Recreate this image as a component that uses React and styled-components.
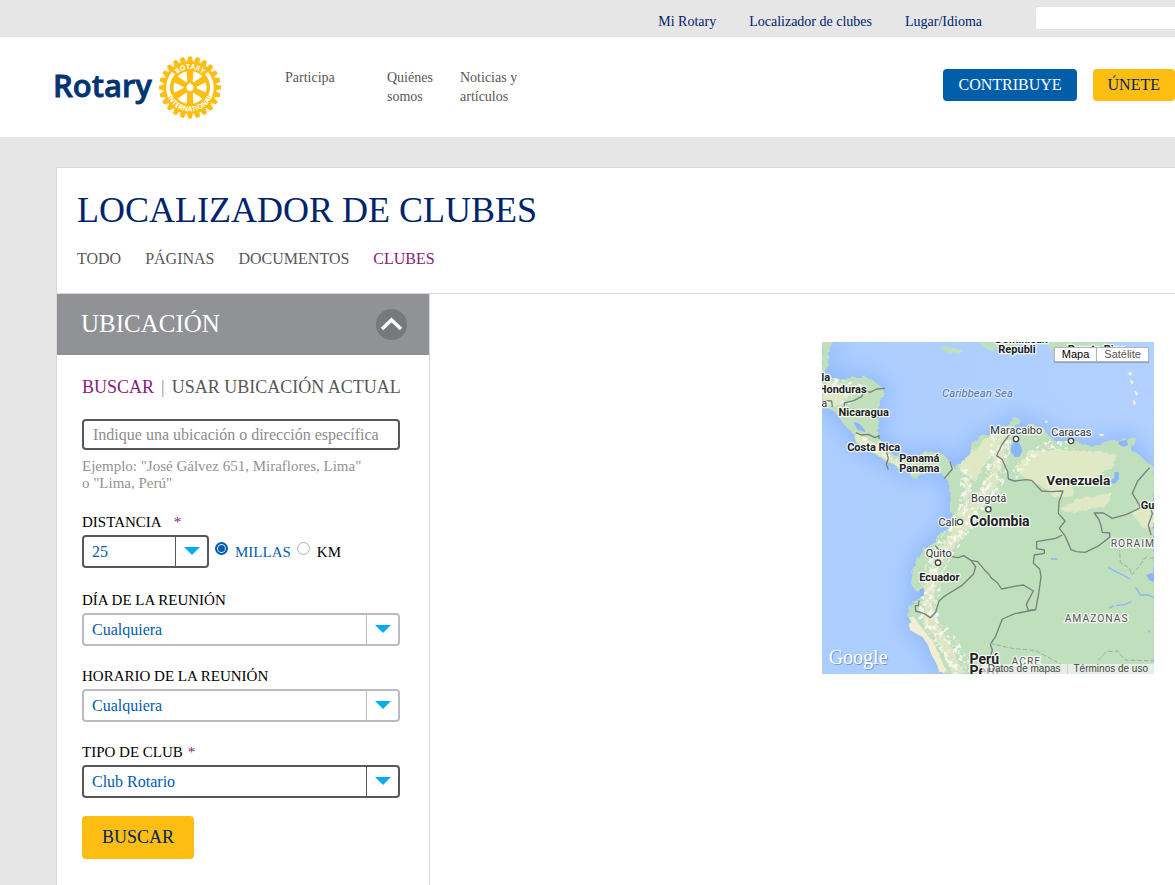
import { useState } from "react";
import styled, { createGlobalStyle } from "styled-components";

const serif = '"Liberation Serif", "Times New Roman", serif';

const GlobalStyle = createGlobalStyle`
  * {
    box-sizing: border-box;
  }

  body {
    margin: 0;
    background: #e6e6e6;
    font-family: ${serif};
    font-size: 15px;
    color: #58585a;
  }

  button, input, select {
    font-family: inherit;
  }
`;

const Page = styled.div`
  display: flex;
  flex-direction: column;
  min-height: 100vh;
`;

const TopBar = styled.div`
  display: flex;
  justify-content: flex-end;
  align-items: flex-start;
  height: 37px;
  padding: 7px 0 0 56px;
`;

const TopLinks = styled.nav`
  display: flex;
  gap: 33px;
  padding-top: 5px;

  a {
    color: #00246c;
    font-size: 14px;
    line-height: 19px;
    text-decoration: none;
  }
`;

const TopSearch = styled.input`
  width: 139px;
  height: 22px;
  margin-left: 54px;
  padding: 0 8px;
  border: none;
  border-radius: 2px 0 0 2px;
  background: #fff;
`;

const Header = styled.header`
  display: flex;
  align-items: flex-start;
  height: 100px;
  padding: 18px 0 0 54px;
  background: #fff;
`;

const LogoLink = styled.a`
  display: block;
  width: 170px;
  height: 64px;
  flex: none;

  svg {
    display: block;
  }
`;

const MainNav = styled.nav`
  display: flex;
  flex: 1;
  padding: 13px 0 0 61px;
`;

const NavItem = styled.a`
  width: ${(props) => (props.$wide ? "102px" : "73px")};
  color: #58585a;
  font-size: 14px;
  line-height: 19px;
  text-decoration: none;
`;

const Actions = styled.div`
  display: flex;
  gap: 16px;
  padding-top: 14px;
`;

const ActionButton = styled.button`
  height: 32px;
  padding: 0 15px;
  border: none;
  border-radius: 4px;
  background: ${(props) => (props.$gold ? "#febd11" : "#005daa")};
  color: ${(props) => (props.$gold ? "#00246c" : "#fff")};
  font-size: 16px;
  line-height: 32px;
  cursor: pointer;
`;

const Main = styled.main`
  display: flex;
  flex-direction: column;
  flex: 1;
  margin: 30px 0 0 56px;
  border: 1px solid #d9d9d9;
  border-width: 1px 0 0 1px;
  background: #fff;
`;

const TitleBlock = styled.div`
  padding: 21px 20px 24px;
  border-bottom: 1px solid #d9d9d9;

  h1 {
    margin: 0 0 18px;
    color: #00246c;
    font-size: 36px;
    font-weight: normal;
    line-height: 42px;
  }
`;

const Tabs = styled.nav`
  display: flex;
  gap: 24px;
`;

const Tab = styled.a`
  color: ${(props) => (props.$active ? "#872175" : "#58585a")};
  font-size: 16px;
  line-height: 20px;
  text-decoration: none;
`;

const Columns = styled.div`
  display: flex;
  flex: 1;
`;

const Sidebar = styled.aside`
  width: 373px;
  flex: none;
  border-right: 1px solid #d9d9d9;
`;

const PanelHeader = styled.div`
  display: flex;
  align-items: center;
  justify-content: space-between;
  height: 61px;
  padding: 0 22px 0 24px;
  background: #919295;

  h2 {
    margin: 0;
    padding-bottom: 2px;
    color: #fff;
    font-size: 25px;
    font-weight: normal;
    line-height: 30px;
  }
`;

const CollapseButton = styled.button`
  width: 31px;
  height: 31px;
  padding: 0;
  border: none;
  border-radius: 50%;
  background: #77787b;
  cursor: pointer;

  svg {
    display: block;
  }
`;

const Form = styled.form`
  padding: 22px 29px 24px 25px;
`;

const ModeRow = styled.div`
  display: flex;
  gap: 7px;
  margin-bottom: 22px;
  color: #919295;
  font-size: 18px;
  line-height: 20px;
  white-space: nowrap;
`;

const ModeButton = styled.button`
  padding: 0;
  border: none;
  background: none;
  color: ${(props) => (props.$active ? "#872175" : "#58585a")};
  font-size: 18px;
  line-height: 20px;
  cursor: pointer;
`;

const TextInput = styled.input`
  display: block;
  width: 100%;
  height: 31px;
  padding: 0 9px;
  border: 2px solid #58585a;
  border-radius: 4px;
  color: #005daa;
  font-size: 16px;

  &::placeholder {
    color: #8c8c8e;
    opacity: 1;
  }
`;

const Hint = styled.p`
  margin: 8px 0 20px;
  color: #919295;
  font-size: 15px;
  line-height: 17px;
`;

const Field = styled.div`
  margin-bottom: 20px;

  &:last-of-type {
    margin-bottom: 18px;
  }
`;

const Label = styled.label`
  display: flex;
  gap: ${(props) => (props.$spaced ? "12px" : "5px")};
  margin-bottom: 3px;
  color: #000;
  font-size: 15px;
  line-height: 20px;

  span {
    color: #872175;
  }
`;

const SelectBox = styled.div`
  display: grid;
  grid-template-columns: 1fr 32px;
  width: ${(props) => (props.$short ? "127px" : "100%")};
  height: 33px;
  border: 2px solid;
  border-color: ${(props) => (props.$required ? "#58585a" : "#bbbbc0")};
  border-radius: 4px;

  select {
    grid-area: 1 / 1 / 2 / 3;
    padding: 0 40px 0 8px;
    border: none;
    background: none;
    color: #005daa;
    font-size: 16px;
    appearance: none;
    cursor: pointer;
  }

  svg {
    grid-area: 1 / 2 / 2 / 3;
    width: 32px;
    height: 29px;
    border-left: 1px solid;
    border-color: inherit;
    pointer-events: none;
  }
`;

const DistanceRow = styled.div`
  display: flex;
  align-items: flex-start;
  margin-bottom: 22px;
`;

const RadioLabel = styled.label`
  display: flex;
  gap: 7px;
  margin: 7px 0 0 6px;
  color: ${(props) => (props.$checked ? "#005daa" : "#000")};
  font-size: 15px;
  line-height: 20px;
  cursor: pointer;

  input {
    width: 13px;
    height: 13px;
    margin: 0;
    border: 1px solid #b5b5b8;
    border-radius: 50%;
    background: #fff;
    appearance: none;
  }

  input:checked {
    border: 2px solid #005daa;
    background: #005daa;
    box-shadow: inset 0 0 0 1px #fff;
  }
`;

const SubmitButton = styled.button`
  height: 43px;
  padding: 0 20px;
  border: none;
  border-radius: 4px;
  background: #febd11;
  color: #00246c;
  font-size: 18px;
  cursor: pointer;
`;

const Results = styled.section`
  display: flex;
  flex: 1;
  justify-content: flex-end;
  align-items: flex-start;
  padding: 48px 21px 24px;
`;

const MapFrame = styled.div`
  position: relative;
  width: 332px;
  height: 332px;
  overflow: hidden;

  > svg {
    display: block;
    width: 100%;
    height: 100%;
  }
`;

const MapTypes = styled.div`
  position: absolute;
  top: 5px;
  right: 5px;
  display: flex;
  border: 1px solid #b0b5bd;
  background: #fff;
  box-shadow: 0 1px 1px rgba(0, 0, 0, 0.2);
`;

const MapType = styled.button`
  height: 13px;
  padding: 0 7px;
  border: none;
  background: none;
  color: ${(props) => (props.$active ? "#000" : "#565656")};
  font-family: "Liberation Sans", Arial, sans-serif;
  font-size: 11px;
  line-height: 13px;
  cursor: pointer;

  & + & {
    border-left: 1px solid #b0b5bd;
  }
`;

const MapTerms = styled.div`
  position: absolute;
  right: 0;
  bottom: 0;
  display: flex;
  background: rgba(245, 245, 245, 0.7);

  a {
    padding: 0 6px;
    color: #444;
    font-family: "Liberation Sans", Arial, sans-serif;
    font-size: 10px;
    line-height: 10px;
    text-decoration: none;
  }

  a + a {
    border-left: 1px solid #ccd5cc;
  }
`;

const teeth = Array.from({ length: 24 }, (_, i) => i * 15);
const spokes = [0, 60, 120, 180, 240, 300];

function RotaryLogo() {
  return (
    <svg width="170" height="64" viewBox="0 0 170 64" role="img" aria-label="Rotary">
      <text
        x="-1"
        y="42"
        fill="#003470"
        stroke="#003470"
        strokeWidth="0.8"
        fontFamily="Open Sans"
        fontWeight="600"
        fontSize="31"
      >
        Rotary
      </text>
      <g transform="translate(136 32.5)">
        <g fill="#febd11">
          {teeth.map((angle) => (
            <path key={angle} d="M-3 -26 L-1.800 -31 L1.800 -31 L3 -26Z" transform={`rotate(${angle})`} />
          ))}
          <circle r="26.500" />
        </g>
        <g fill="none" stroke="#fff" strokeWidth="3.600">
          <path d="M-16.500 -14.500 A22 22 0 0 0 -20 9" />
          <path d="M16.500 -14.500 A22 22 0 0 1 20 9" />
        </g>
        <circle r="16.500" fill="#fff" />
        <g fill="#febd11">
          {spokes.map((angle) => (
            <path key={angle} d="M-2.600 -4 L-3.400 -17 L3.400 -17 L2.600 -4Z" transform={`rotate(${angle})`} />
          ))}
          <circle r="6.500" />
        </g>
        <circle r="3.500" fill="#fff" />
        <path d="M-1 -4.500 h2 v2 h-2z" fill="#fff" />
        <path id="wheel-top" d="M-18.500 0 A18.500 18.500 0 0 1 18.500 0" fill="none" />
        <path id="wheel-bottom" d="M-24 0 A24 24 0 0 0 24 0" fill="none" />
        <g fill="#fff" fontFamily="Open Sans" fontWeight="700" fontSize="7" textAnchor="middle">
          <text>
            <textPath href="#wheel-top" startOffset="50%">ROTARY</textPath>
          </text>
          <text>
            <textPath href="#wheel-bottom" startOffset="50%">INTERNATIONAL</textPath>
          </text>
        </g>
      </g>
    </svg>
  );
}

const land =
  "M21 21 L55 21 L48 42 L40 60 L38 95 L32 118 L45 128 L90 132 L120 126 L150 126 L168 131 L185 145 L205 162 L208 180 L195 198 L193 225 L188 240 L192 262 L186 285 L192 310 L212 335 L235 360 L258 368 L290 372 L310 365 L325 352 L350 350 L385 358 L398 372 L412 388 L423 404 L427 388 L445 375 L465 360 L470 335 L480 315 L503 298 L520 302 L540 292 L560 275 L584 272 L585 256 L602 250 L618 256 L612 268 L598 276 L585 298 L604 300 L635 286 L642 272 L652 262 L664 274 L690 281 L696 296 L720 318 L760 318 L785 315 L800 328 L835 333 L860 325 L892 314 L915 315 L942 310 L965 308 L958 328 L945 342 L962 352 L980 366 L1000 386 L1017 396 L1017 1017 L375 1017 L367 990 L350 960 L338 928 L322 905 L285 885 L282 870 L290 862 L276 838 L278 822 L290 808 L305 795 L325 782 L326 764 L316 760 L312 770 L303 768 L292 752 L290 720 L298 690 L318 658 L322 642 L340 634 L362 622 L366 598 L382 590 L403 580 L410 540 L404 515 L410 498 L405 465 L400 440 L388 425 L370 405 L345 398 L325 410 L308 428 L290 427 L284 410 L250 402 L235 387 L215 382 L195 365 L160 347 L125 326 L118 300 L90 272 L70 245 L55 225 L21 218Z";

const borders = [
  "M148 165 L165 172 L185 162 L210 160 M148 165 L140 185 L118 196 L88 204 L88 214",
  "M21 196 L50 198 L52 216",
  "M122 293 L140 300 L160 298 L180 308 L192 302 L192 312",
  "M214 348 L220 370 L214 388 L220 404",
  "M405 380 L412 402 L402 414 L388 430",
  "M582 300 L560 330 L545 362 L562 374 L578 410 L580 432 L598 438 L632 434 L650 436 L680 468 L710 470 L744 468 L732 500 L730 535 L750 558 L733 580 L750 602 L758 620 L768 644 L784 650 L810 652 L848 634 L862 624 L884 606 L884 594 L862 592 L858 572 L852 554 L838 534 L865 534 L892 550 L935 538 L972 520 L976 515 L952 475 L968 438 L1004 398",
  "M1004 510 L1012 536 L1000 570 L1008 600",
  "M742 600 L722 610 L665 620 L665 641 L688 645 L688 655 L658 660 L655 684 L674 702 L678 725 L672 770 L662 824 L640 826 L634 808 L655 768 L625 750 L598 754 L560 762 L548 744 L530 730 L520 716 L508 704 L488 680 L468 676 L446 662 L430 668 L406 664 L382 654 L360 632",
  "M468 676 L482 696 L475 718 L440 752 L404 774 L388 784 L372 798 L362 832 L346 848 L328 836 L302 828 L301 812 L310 812 L312 796",
  "M662 824 L640 828 L600 836 L562 852 L554 872 L542 904 L526 928 L532 945 L524 972",
];

const dashedBorders =
  "M525 925 L590 940 L660 946 L706 970 L740 990 M1017 670 L990 668 L970 698 L950 720 L944 700 L916 682 L914 645 M850 975 L875 950 L908 948 L930 975 L1017 978";

const deserts = [
  "M470 350 L510 310 L550 300 L540 350 L500 400 L480 440 L440 410 L430 392Z",
  "M600 400 L640 350 L690 345 L760 345 L850 350 L905 360 L890 400 L850 420 L830 450 L780 440 L770 480 L720 490 L690 460 L630 430Z",
  "M735 520 L780 495 L830 485 L890 470 L880 510 L840 520 L800 530 L750 530Z",
  "M960 515 L1017 510 L1017 580 L985 580 L955 540Z",
  "M120 285 L140 305 L190 330 L235 370 L260 400 L240 390 L150 340 L125 320Z",
  "M35 140 L80 145 L120 165 L80 210 L55 215 L21 200Z",
];

const cities = [
  ["Maracaibo", 604, 296, 603, 312],
  ["Caracas", 769, 302, 768, 318],
  ["Bogotá", 521, 502, 520, 523],
  ["Quito", 371, 667, 369, 683],
];

const countries = [
  ["Republi", 606, 55],
  ["Dominican", 620, 25],
  ["Puerto Rico", 845, 55],
  ["Honduras", 83, 175],
  ["la", 32, 139],
  ["Nicaragua", 146, 244],
  ["Costa Rica", 176, 347],
  ["Panamá", 313, 381],
  ["Panama", 313, 412],
  ["Ecuador", 373, 738],
];

function MapDrawing() {
  return (
    <svg viewBox="21 21 996 996" role="img" aria-label="Mapa">
      <defs>
        <linearGradient id="sea" x1="0" y1="0" x2="1" y2="0">
          <stop offset="0" stopColor="#abcdff" />
          <stop offset="1" stopColor="#b3d1ff" />
        </linearGradient>
        <filter id="soft" x="-20%" y="-20%" width="140%" height="140%">
          <feGaussianBlur stdDeviation="34" />
        </filter>
        <filter id="ragged">
          <feTurbulence type="fractalNoise" baseFrequency="0.05" numOctaves="3" seed="4" />
          <feDisplacementMap in="SourceGraphic" scale="16" />
        </filter>
        <filter id="peaks" x="-10%" y="-10%" width="120%" height="120%">
          <feTurbulence type="fractalNoise" baseFrequency="0.07" numOctaves="4" seed="9" result="noise" />
          <feColorMatrix in="noise" type="matrix" values="0 0 0 0 0  0 0 0 0 0  0 0 0 0 0  6 0 0 0 -3" result="mask" />
          <feComposite in="SourceGraphic" in2="mask" operator="in" />
        </filter>
        <clipPath id="coast">
          <path d={land} />
        </clipPath>
      </defs>
      <rect x="21" y="21" width="996" height="996" fill="url(#sea)" />
      <path d={land} fill="#8fb8fb" stroke="#8fb8fb" strokeWidth="24" filter="url(#soft)" />
      <g fill="#c0dfbc" filter="url(#ragged)">
        <path d={land} />
        <path d="M374 38 L400 35 L440 45 L435 55 L405 58Z" />
        <path d="M490 21 L600 21 L610 42 L585 50 L560 42 L520 44Z" />
        <path d="M700 21 L880 21 L880 42 L700 42Z" />
      </g>
      <g clipPath="url(#coast)">
        <g fill="#dfe9c6" filter="url(#ragged)">
          {deserts.map((d) => (
            <path key={d} d={d} />
          ))}
        </g>
        <g fill="none" stroke="#dde6c4" strokeLinejoin="round" filter="url(#ragged)">
          <path d="M565 300 L550 380 L520 460 L480 520 L430 600 L370 670 L345 760 L340 850 L390 930 L430 1017" strokeWidth="30" />
          <path d="M460 430 L450 520 L420 590" strokeWidth="18" />
          <path d="M278 850 L300 880 L340 930 L380 1017" stroke="#f3edd3" strokeWidth="34" />
        </g>
        <g fill="none" stroke="#fafaf5" strokeOpacity="0.85" strokeLinejoin="round" filter="url(#peaks)">
          <path d="M560 300 L550 380 L530 460 L480 520 L420 600 L370 670 L345 760 L340 850 L400 930 L450 1017" strokeWidth="62" />
          <path d="M590 430 L640 365 L700 330 L780 330" strokeWidth="24" />
          <path d="M455 400 L450 520 L400 600" strokeWidth="36" />
          <path d="M40 140 L130 160 L80 210" strokeWidth="30" />
          <path d="M140 310 L230 370 L300 410" strokeWidth="22" />
        </g>
      </g>
      <g fill="#8bb5fb">
        <path d="M598 320 L612 322 L622 345 L614 365 L600 366 L588 350 L588 334Z" />
        <path d="M115 262 L130 264 L150 284 L150 291 L128 284Z" />
        <path d="M898 412 L912 410 L912 432 L902 444 L892 446 L884 436 L898 430Z" />
        <path d="M912 318 L935 315 L940 330 L925 335 L910 328Z" />
        <path d="M994 720 L1010 714 L1017 718 L1017 742 L1004 736Z" />
        <path d="M314 764 L326 758 L326 782 L318 784Z" />
      </g>
      <path
        d="M880 698 L906 712 L924 720 L946 732 M962 756 L976 780 L1000 780 L1017 788 M882 820 L896 812 M904 812 L930 808 L950 800 M1000 885 L1004 892 M708 672 L728 672"
        fill="none"
        stroke="#8bb5fb"
        strokeWidth="4"
      />
      <g fill="#eef0d5">
        <path d="M938 116 L950 112 L948 122Z M946 136 L956 140 L950 148Z M960 168 L968 174 L964 182Z M956 196 L962 206 L956 208Z M852 298 L866 298 L862 304Z M690 258 L698 260 L694 264Z" stroke="#eef0d5" strokeWidth="3" />
      </g>
      <g fill="none" stroke="#77827b" strokeWidth="4" strokeLinejoin="round">
        {borders.map((d) => (
          <path key={d} d={d} />
        ))}
        <path d={dashedBorders} stroke="#9fb0a0" strokeWidth="3" strokeDasharray="14 6" />
      </g>
      <g fontFamily="Roboto" textAnchor="middle" stroke="#fff" strokeOpacity="0.8" strokeWidth="8" strokeLinejoin="round" paintOrder="stroke">
        <text x="381" y="187" fill="#5577a5" strokeOpacity="0.4" fontSize="34" fontStyle="italic" textAnchor="start">
          Caribbean Sea
        </text>
        <g fill="#222" fontSize="33" fontWeight="700">
          {countries.map(([name, x, y]) => (
            <text key={name} x={x} y={y}>
              {name}
            </text>
          ))}
          <text x="998" y="523">Gu</text>
          <text x="554" y="573" fontSize="42">Colombia</text>
          <text x="790" y="450" fontSize="41">Venezuela</text>
          <text x="508" y="986" fontSize="42">Perú</text>
          <text x="508" y="1024" fontSize="42">Peru</text>
        </g>
        <g fill="#333" fontSize="33">
          <text x="28" y="216">a</text>
          <text x="398" y="572">Cali</text>
          {cities.map(([name, x, y]) => (
            <text key={name} x={x} y={y}>
              {name}
            </text>
          ))}
        </g>
        <g fill="#555" fontSize="31" letterSpacing="3">
          <text x="887" y="636" textAnchor="start">RORAIMA</text>
          <text x="845" y="860">AMAZONAS</text>
          <text x="634" y="990">ACRE</text>
        </g>
      </g>
      <g fill="#fff" stroke="#444" strokeWidth="4">
        {cities.map(([name, , , cx, cy]) => (
          <circle key={name} cx={cx} cy={cy} r="8" />
        ))}
        <circle cx="435" cy="561" r="8" />
      </g>
      <g fontFamily="Liberation Serif" fontSize="60">
        <text x="44" y="989" fill="#5f7fae" fillOpacity="0.7">Google</text>
        <text x="41" y="986" fill="#fff">Google</text>
      </g>
    </svg>
  );
}

function SelectField({ id, label, options, required }) {
  return (
    <Field>
      <Label htmlFor={id}>
        {label}
        {required && <span>*</span>}
      </Label>
      <SelectBox $required={required}>
        <select id={id}>
          {options.map((option) => (
            <option key={option}>{option}</option>
          ))}
        </select>
        <Arrow />
      </SelectBox>
    </Field>
  );
}

function Arrow() {
  return (
    <svg viewBox="0 0 31 29" aria-hidden="true">
      <path d="M8 10h16l-8 8z" fill="#00aeef" />
    </svg>
  );
}

export default function App() {
  const [unit, setUnit] = useState("MILLAS");
  const [isOpen, setIsOpen] = useState(true);

  return (
    <Page>
      <GlobalStyle />
      <TopBar>
        <TopLinks>
          <a href="#mi-rotary">Mi Rotary</a>
          <a href="#localizador">Localizador de clubes</a>
          <a href="#idioma">Lugar/Idioma</a>
        </TopLinks>
        <TopSearch type="text" aria-label="Búsqueda" />
      </TopBar>
      <Header>
        <LogoLink href="#inicio">
          <RotaryLogo />
        </LogoLink>
        <MainNav>
          <NavItem href="#participa" $wide>Participa</NavItem>
          <NavItem href="#quienes">
            Quiénes
            <br />
            somos
          </NavItem>
          <NavItem href="#noticias">
            Noticias y
            <br />
            artículos
          </NavItem>
        </MainNav>
        <Actions>
          <ActionButton>CONTRIBUYE</ActionButton>
          <ActionButton $gold>ÚNETE</ActionButton>
        </Actions>
      </Header>
      <Main>
        <TitleBlock>
          <h1>LOCALIZADOR DE CLUBES</h1>
          <Tabs>
            <Tab href="#todo">TODO</Tab>
            <Tab href="#paginas">PÁGINAS</Tab>
            <Tab href="#documentos">DOCUMENTOS</Tab>
            <Tab href="#clubes" $active>CLUBES</Tab>
          </Tabs>
        </TitleBlock>
        <Columns>
          <Sidebar>
            <PanelHeader>
              <h2>UBICACIÓN</h2>
              <CollapseButton aria-label="Contraer" onClick={() => setIsOpen(!isOpen)}>
                <svg width="31" height="31" viewBox="0 0 31 31">
                  <path d="M6 20l9.500-9 9.500 9" fill="none" stroke="#fff" strokeWidth="3.500" />
                </svg>
              </CollapseButton>
            </PanelHeader>
            {isOpen && (
              <Form onSubmit={(e) => e.preventDefault()}>
                <ModeRow>
                  <ModeButton type="button" $active>BUSCAR</ModeButton>
                  <span>|</span>
                  <ModeButton type="button">USAR UBICACIÓN ACTUAL</ModeButton>
                </ModeRow>
                <TextInput
                  type="text"
                  aria-label="Ubicación"
                  placeholder="Indique una ubicación o dirección específica"
                />
                <Hint>
                  Ejemplo: "José Gálvez 651, Miraflores, Lima"
                  <br />o "Lima, Perú"
                </Hint>
                <Label htmlFor="distancia" $spaced>
                  DISTANCIA <span>*</span>
                </Label>
                <DistanceRow>
                  <SelectBox $short $required>
                    <select id="distancia">
                      <option>25</option>
                      <option>50</option>
                    </select>
                    <Arrow />
                  </SelectBox>
                  {["MILLAS", "KM"].map((name) => (
                    <RadioLabel key={name} $checked={unit === name}>
                      <input
                        type="radio"
                        name="unidad"
                        checked={unit === name}
                        onChange={() => setUnit(name)}
                      />
                      {name}
                    </RadioLabel>
                  ))}
                </DistanceRow>
                <SelectField id="dia" label="DÍA DE LA REUNIÓN" options={["Cualquiera"]} />
                <SelectField id="horario" label="HORARIO DE LA REUNIÓN" options={["Cualquiera"]} />
                <SelectField id="tipo" label="TIPO DE CLUB" options={["Club Rotario"]} required />
                <SubmitButton type="submit">BUSCAR</SubmitButton>
              </Form>
            )}
          </Sidebar>
          <Results>
            <MapFrame>
              <MapDrawing />
              <MapTypes>
                <MapType $active>Mapa</MapType>
                <MapType>Satélite</MapType>
              </MapTypes>
              <MapTerms>
                <a href="#datos">Datos de mapas</a>
                <a href="#terminos">Términos de uso</a>
              </MapTerms>
            </MapFrame>
          </Results>
        </Columns>
      </Main>
    </Page>
  );
}
